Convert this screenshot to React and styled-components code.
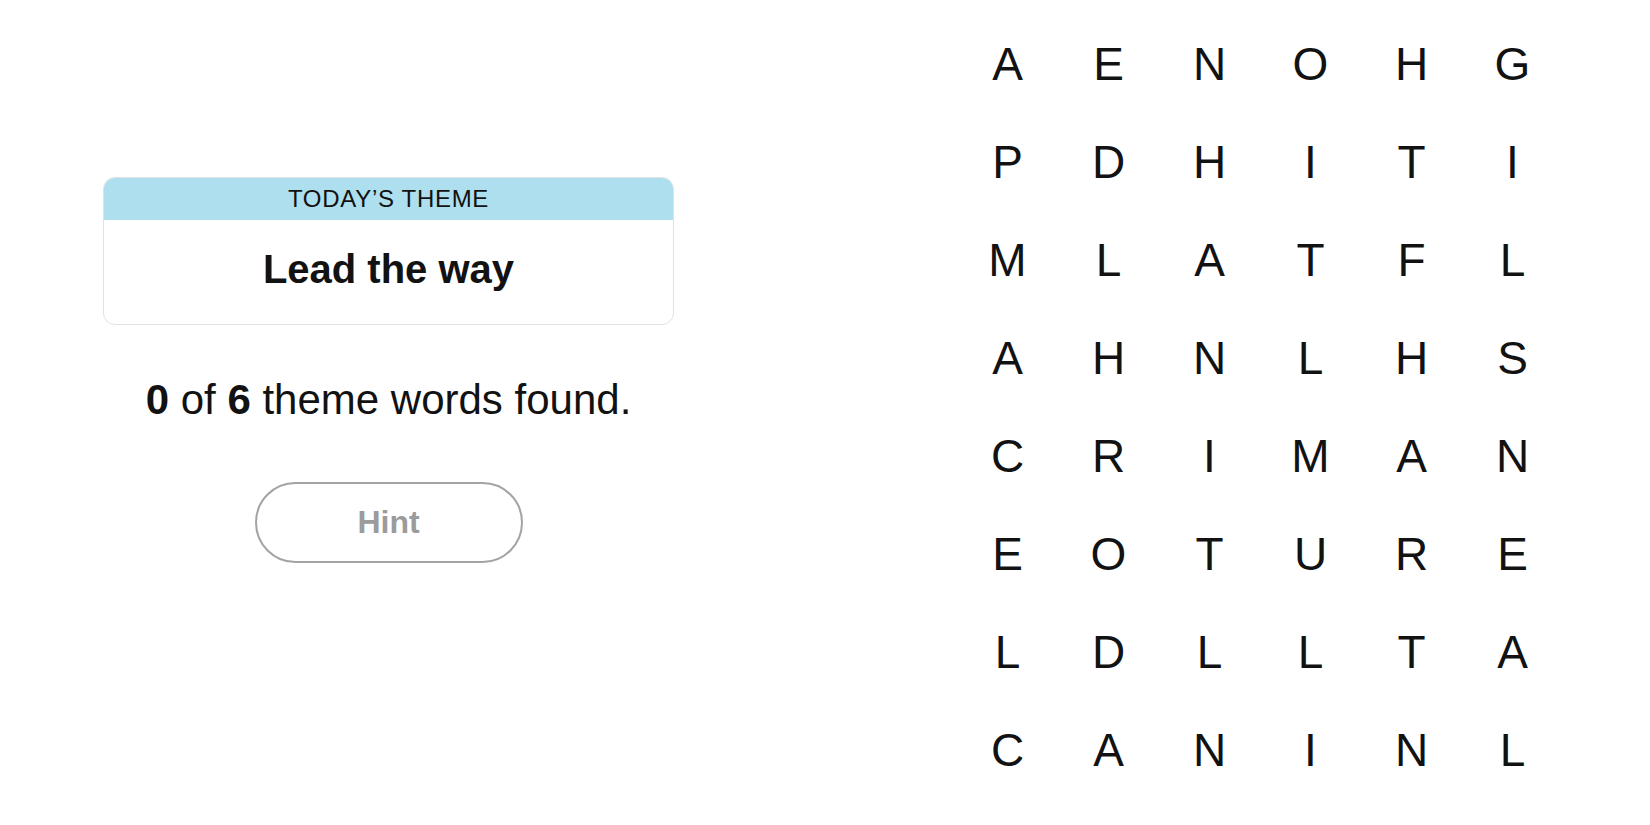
import React from "react";
import styled, { createGlobalStyle } from "styled-components";

const GlobalStyle = createGlobalStyle`
  body {
    margin: 0;
    background: #ffffff;
    font-family: "Liberation Sans", Arial, sans-serif;
    color: #121212;
  }
`;

const rows = [
  "AENOHG",
  "PDHITI",
  "MLATFL",
  "AHNLHS",
  "CRIMAN",
  "EOTURE",
  "LDLLTA",
  "CANINL",
];

function App() {
  return (
    <>
      <GlobalStyle />
      <Page>
        <Sidebar>
          <ThemeCard>
            <ThemeHeader>TODAY’S THEME</ThemeHeader>
            <ThemeBody>Lead the way</ThemeBody>
          </ThemeCard>
          <Progress>
            <b>0</b> of <b>6</b> theme words found.
          </Progress>
          <HintButton type="button" disabled>
            Hint
          </HintButton>
        </Sidebar>
        <Board>
          {rows.map((row, r) =>
            row.split("").map((letter, c) => (
              <Cell key={`${r}-${c}`}>{letter}</Cell>
            ))
          )}
        </Board>
      </Page>
    </>
  );
}

const Page = styled.main`
  display: flex;
  align-items: flex-start;
  width: 1650px;
  height: 825px;
  overflow: hidden;
`;

const Sidebar = styled.section`
  width: 777px;
  padding-top: 177px;
  display: flex;
  flex-direction: column;
  align-items: center;
`;

const ThemeCard = styled.div`
  width: 571px;
  box-sizing: border-box;
  border: 1px solid #e2e2e2;
  border-radius: 12px;
  overflow: hidden;
`;

const ThemeHeader = styled.div`
  height: 42px;
  background: #aedfee;
  display: flex;
  align-items: center;
  justify-content: center;
  font-size: 24px;
  letter-spacing: 0.7px;
  color: #121212;
`;

const ThemeBody = styled.div`
  height: 98px;
  padding-bottom: 6px;
  display: flex;
  align-items: center;
  justify-content: center;
  font-size: 40px;
  font-weight: 700;
`;

const Progress = styled.p`
  margin: 55px 0 0;
  font-size: 42px;
  line-height: 40px;
  b {
    font-weight: 700;
  }
`;

const HintButton = styled.button`
  margin-top: 62px;
  width: 268px;
  height: 81px;
  border: 2.5px solid #a3a3a3;
  border-radius: 41px;
  background: #ffffff;
  color: #9b9b9b;
  font-family: "Liberation Sans", Arial, sans-serif;
  font-size: 32px;
  font-weight: 700;
`;

const Board = styled.section`
  margin-left: 180px;
  padding-top: 15px;
  display: grid;
  grid-template-columns: repeat(6, 101px);
  grid-auto-rows: 98px;
`;

const Cell = styled.div`
  display: flex;
  align-items: center;
  justify-content: center;
  font-size: 46px;
  line-height: 1;
  color: #121212;
`;

export default App;
